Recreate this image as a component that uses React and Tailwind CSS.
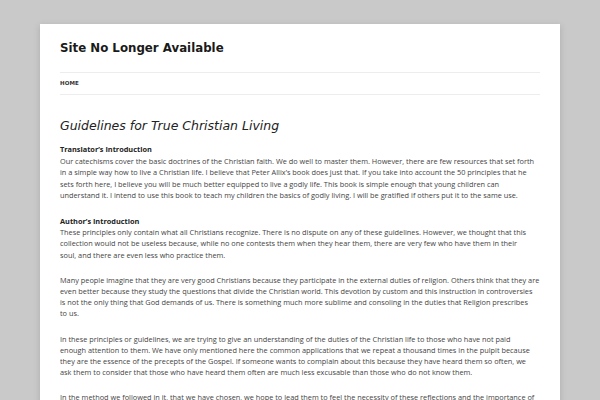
import React from "react";

const P = ({ lines, className = "" }) => (
  <p className={"whitespace-nowrap " + className}>
    {lines.map((l, i) => (
      <React.Fragment key={i}>
        {l}
        {i < lines.length - 1 && <br />}
      </React.Fragment>
    ))}
  </p>
);

export default function App() {
  return (
    <div className="w-[600px] h-[400px] overflow-hidden bg-[#c9c9c9] pt-[24px] pl-[40px]">
      <div className="w-[520px] h-[420px] bg-white shadow-[0_2px_6px_rgba(100,100,100,0.3)] px-[20px] pt-[16px]">
        <header>
          <h1 className="font-['DejaVu_Sans',sans-serif] font-bold text-[11.8px] leading-[16px] text-[#1a1a1a]">
            Site No Longer Available
          </h1>
          <nav className="mt-[16px] border-y border-[#ededed] h-[23px] flex items-center">
            <span className="font-['DejaVu_Sans',sans-serif] font-bold text-[5.5px] leading-none text-[#333] tracking-[0.1px]">
              HOME
            </span>
          </nav>
        </header>
        <main className="font-['Open_Sans',sans-serif] text-[7.35px] leading-[11.2px] text-[#444]">
          <h2 className="mt-[24px] font-['DejaVu_Sans',sans-serif] italic text-[12.5px] leading-[14px] text-[#222]">
            Guidelines for True Christian Living
          </h2>
          <div className="mt-[11px] font-bold text-[#222]">Translator’s Introduction</div>
          <P
            className="mt-[1px]"
            lines={[
              "Our catechisms cover the basic doctrines of the Christian faith. We do well to master them. However, there are few resources that set forth",
              "in a simple way how to live a Christian life. I believe that Peter Allix’s book does just that. If you take into account the 50 principles that he",
              "sets forth here, I believe you will be much better equipped to live a godly life. This book is simple enough that young children can",
              "understand it. I intend to use this book to teach my children the basics of godly living. I will be gratified if others put it to the same use.",
            ]}
          />
          <div className="mt-[15px] font-bold text-[#222]">Author’s Introduction</div>
          <P
            lines={[
              "These principles only contain what all Christians recognize. There is no dispute on any of these guidelines. However, we thought that this",
              "collection would not be useless because, while no one contests them when they hear them, there are very few who have them in their",
              "soul, and there are even less who practice them.",
            ]}
          />
          <P
            className="mt-[14px]"
            lines={[
              "Many people imagine that they are very good Christians because they participate in the external duties of religion. Others think that they are",
              "even better because they study the questions that divide the Christian world. This devotion by custom and this instruction in controversies",
              "is not the only thing that God demands of us. There is something much more sublime and consoling in the duties that Religion prescribes",
              "to us.",
            ]}
          />
          <P
            className="mt-[14px]"
            lines={[
              "In these principles or guidelines, we are trying to give an understanding of the duties of the Christian life to those who have not paid",
              "enough attention to them. We have only mentioned here the common applications that we repeat a thousand times in the pulpit because",
              "they are the essence of the precepts of the Gospel. If someone wants to complain about this because they have heard them so often, we",
              "ask them to consider that those who have heard them often are much less excusable than those who do not know them.",
            ]}
          />
          <P
            className="mt-[14px]"
            lines={[
              "In the method we followed in it, that we have chosen, we hope to lead them to feel the necessity of these reflections and the importance of",
            ]}
          />
        </main>
      </div>
    </div>
  );
}
